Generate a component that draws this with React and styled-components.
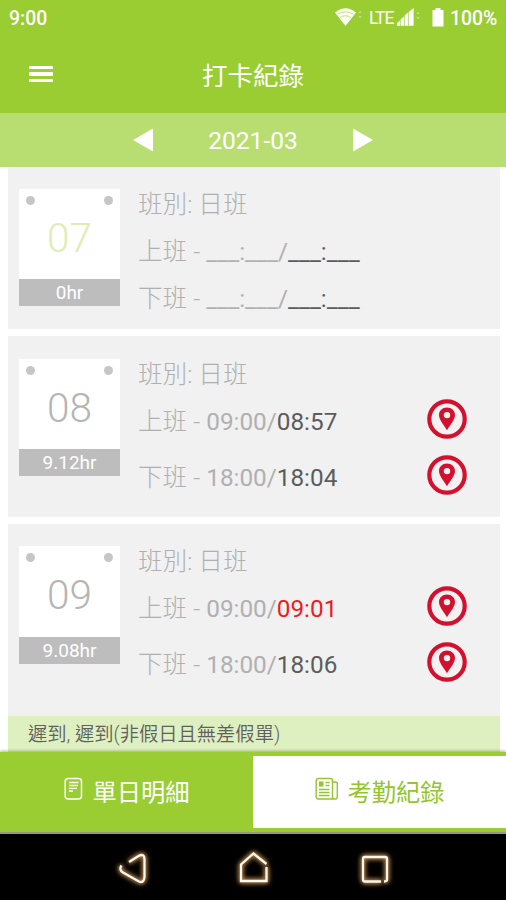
import React from "react";
import styled, { createGlobalStyle } from "styled-components";

const records = [
  {
    day: "07",
    hours: "0hr",
    holiday: true,
    shift: "日班",
    punches: [
      { label: "上班", plan: "___:___", real: "___:___" },
      { label: "下班", plan: "___:___", real: "___:___" },
    ],
  },
  {
    day: "08",
    hours: "9.12hr",
    shift: "日班",
    punches: [
      { label: "上班", plan: "09:00", real: "08:57", located: true },
      { label: "下班", plan: "18:00", real: "18:04", located: true },
    ],
  },
  {
    day: "09",
    hours: "9.08hr",
    shift: "日班",
    punches: [
      { label: "上班", plan: "09:00", real: "09:01", late: true, located: true },
      { label: "下班", plan: "18:00", real: "18:06", located: true },
    ],
    note: "遲到, 遲到(非假日且無差假單)",
  },
];

function StatusIcons() {
  return (
    <svg width="166" height="24" viewBox="332 6 166 24" fill="#fff">
      <path d="M335 12.500Q345.500 4 356 12.500L345.500 26Z" opacity="0.95" />
      <path
        d="M337.500 14.300Q345.500 9.300 353.500 14.300M340 17.500Q345.500 14 351 17.500"
        fill="none"
        stroke="#9acd32"
        strokeWidth="0.6"
      />
      <path d="M358.500 13l1.500-2.500 1.500 2.500zM358.500 16l1.500 2.500 1.500-2.500z" opacity="0.4" />
      <path d="M397 25.800V23l3-2.500v5.300zM400.600 25.800v-6.300l3.300-3v9.300zM404.600 25.800v-10.300l3.300-3v13.300zM408.600 25.800V12l5-4v17.800z" />
      <path d="M416.500 14l1.500-2.500 1.500 2.500zM416.500 17l1.500 2.500 1.500-2.500z" opacity="0.4" />
      <path d="M435.500 8h5v2h3v16.500h-11V10h3z" />
    </svg>
  );
}

function PinIcon() {
  return (
    <svg width="40" height="40" viewBox="0 0 40 40">
      <circle cx="20" cy="20" r="17.700" fill="#f5f1f1" stroke="#d3112f" strokeWidth="4.200" />
      <path
        fill="#d3112f"
        fillRule="evenodd"
        d="M20 8.500c-4.600 0-8 3.300-8 7.500 0 5 4.400 9 8 15.200 3.600-6.200 8-10.200 8-15.200 0-4.200-3.400-7.500-8-7.500zm0 4.400a3.200 3.200 0 1 1 0 6.400 3.200 3.200 0 0 1 0-6.400z"
      />
    </svg>
  );
}

function DetailIcon() {
  return (
    <svg width="20" height="24" viewBox="0 0 20 24" fill="none" stroke="currentColor">
      <rect x="1.200" y="1.500" width="16.300" height="20.500" rx="3" strokeWidth="1.500" />
      <path d="M5 5.500h9.500M5 8.500h9M5 11.300h8M5 14h4" strokeWidth="1.300" />
    </svg>
  );
}

function NewsIcon() {
  return (
    <svg width="24" height="24" viewBox="0 0 24 24" fill="none" stroke="currentColor">
      <path
        d="M3 1.500h12.500a2 2 0 0 1 2 2V22H3.500a2.300 2.300 0 0 1-2.300-2.300V3.500a2 2 0 0 1 1.800-2zM17.500 5h2.800a2 2 0 0 1 2 2v12.700a2.300 2.300 0 0 1-4.800 0"
        strokeWidth="1.400"
      />
      <path d="M10.500 5.500h4M10.500 8.500h4M4 12.500h10.500M4 15.500h10.500M4 18.500h10.500" strokeWidth="1.300" />
      <rect x="4.500" y="5" width="3.500" height="4" fill="currentColor" />
    </svg>
  );
}

function Record({ record }) {
  return (
    <Card>
      <CardBody $tall={record.punches[0].located}>
        <Calendar>
          <Sheet>
            <Holes>
              <i />
              <i />
            </Holes>
            <Day $holiday={record.holiday}>{record.day}</Day>
          </Sheet>
          <Hours>{record.hours}</Hours>
        </Calendar>
        <Info>
          <Shift>班別: {record.shift}</Shift>
          {record.punches.map((punch) => (
            <Punch key={punch.label} $tall={punch.located}>
              <span>
                {punch.label} - <Time>{punch.plan}/</Time>
                <Real $late={punch.late}>{punch.real}</Real>
              </span>
              {punch.located && <PinIcon />}
            </Punch>
          ))}
        </Info>
      </CardBody>
      {record.note && <Note>{record.note}</Note>}
    </Card>
  );
}

function App() {
  return (
    <Screen>
      <GlobalStyle />
      <StatusBar>
        <span>9:00</span>
        <StatusRight>
          <StatusIcons />
          <Network>LTE</Network>
          <Battery>100%</Battery>
        </StatusRight>
      </StatusBar>
      <Header>
        <MenuButton aria-label="menu">
          <i />
          <i />
          <i />
        </MenuButton>
        <h1>打卡紀錄</h1>
      </Header>
      <MonthBar>
        <svg width="20" height="24" viewBox="0 0 20 24">
          <path d="M0 12L20 0.500V23.500Z" fill="#fff" />
        </svg>
        <span>2021-03</span>
        <svg width="20" height="24" viewBox="0 0 20 24">
          <path d="M20 12L0 0.500V23.500Z" fill="#fff" />
        </svg>
      </MonthBar>
      <List>
        {records.map((record) => (
          <Record key={record.day} record={record} />
        ))}
      </List>
      <Tabs>
        <Tab>
          <DetailIcon />
          <span>單日明細</span>
        </Tab>
        <Tab $active>
          <NewsIcon />
          <span>考勤紀錄</span>
        </Tab>
      </Tabs>
      <NavBar>
        <svg width="34" height="36" viewBox="0 0 34 36">
          <path d="M14 12L23.500 6Q29.500 3 29.500 9V27Q29 33.500 24 31.500L8 22.500Q3.500 19.500 6.500 15.500" />
        </svg>
        <svg width="34" height="36" viewBox="0 0 34 36">
          <path d="M30.500 14L17.500 3.500L5 14.500V31H30.500V17" />
        </svg>
        <svg width="34" height="36" viewBox="0 0 34 36">
          <path d="M24 31.500H8Q6 31.500 6 29.500V9Q6 7 8 7H28Q30 7 30 9V29.500Q30 31.500 27 31.500" />
        </svg>
      </NavBar>
    </Screen>
  );
}

const GlobalStyle = createGlobalStyle`
  * {
    box-sizing: border-box;
  }
  body {
    margin: 0;
    font-family: Roboto, "Noto Sans CJK TC", sans-serif;
    background-color: #fff;
  }
`;

const Screen = styled.div`
  display: flex;
  flex-direction: column;
  width: 506px;
  height: 900px;
  overflow: hidden;
`;

const StatusBar = styled.div`
  display: flex;
  justify-content: space-between;
  align-items: center;
  height: 36px;
  padding: 0 8px 0 9px;
  background-color: #9acd32;
  color: #fff;
  font-size: 19.4px;
  font-weight: 500;
`;

const StatusRight = styled.div`
  display: grid;
  grid-template-columns: 37px 81px 48px;
  align-items: center;

  svg {
    grid-area: 1 / 1 / 2 / 4;
  }
`;

const Network = styled.span`
  grid-area: 1 / 2;
  font-size: 17.5px;
  font-weight: 400;
  letter-spacing: -1px;
`;

const Battery = styled.span`
  grid-area: 1 / 3;
`;

const Header = styled.header`
  display: grid;
  grid-template-columns: 82px 1fr 82px;
  align-items: center;
  height: 77px;
  padding-bottom: 2px;
  background-color: #9acd32;
  color: #fff;

  h1 {
    margin: 0;
    font-size: 25.5px;
    font-weight: 400;
    text-align: center;
  }
`;

const MenuButton = styled.button`
  display: flex;
  flex-direction: column;
  gap: 3.5px;
  margin-left: 29px;
  padding: 1px 0 0;
  border: none;
  background: none;

  i {
    width: 24px;
    height: 3.3px;
    border-radius: 1px;
    background-color: #fff;
  }
`;

const MonthBar = styled.div`
  display: flex;
  justify-content: center;
  align-items: center;
  gap: 55px;
  height: 54px;
  background-color: #b8dd70;
  color: #fff;
  font-size: 24.6px;
`;

const List = styled.main`
  display: flex;
  flex: 1;
  flex-direction: column;
  gap: 7px;
  padding: 0 6px 0 8px;
  overflow: hidden;
`;

const Card = styled.section`
  flex-shrink: 0;
  background-color: #f1f1f1;
`;

const CardBody = styled.div`
  display: flex;
  gap: 18px;
  height: ${({ $tall }) => ($tall ? "180.2px" : "162.4px")};
  padding: ${({ $tall }) => ($tall ? "22.6px" : "22px")} 33px 0 11px;
`;

const Calendar = styled.div`
  width: 101px;
  height: 117px;
`;

const Sheet = styled.div`
  height: 90.4px;
  padding: 7px 7px 0;
  background-color: #fff;
`;

const Holes = styled.div`
  display: flex;
  justify-content: space-between;

  i {
    width: 9px;
    height: 9px;
    border-radius: 50%;
    background-color: #c6c6c6;
  }
`;

const Day = styled.div`
  margin-top: 8.6px;
  color: ${({ $holiday }) => ($holiday ? "#deedb2" : "#b5b5b5")};
  font-size: 40.5px;
  font-weight: 360;
  line-height: 48px;
  text-align: center;
`;

const Hours = styled.div`
  height: 27px;
  background-color: #bdbdbd;
  color: #fff;
  font-size: 19px;
  line-height: 27px;
  text-align: center;
`;

const Info = styled.div`
  flex: 1;
  margin-top: -8px;
  color: #b0b0b0;
  font-size: 24.6px;
  font-weight: 300;
`;

const Shift = styled.div`
  height: 47px;
  line-height: 47px;
`;

const Punch = styled.div`
  display: flex;
  justify-content: space-between;
  height: ${({ $tall }) => ($tall ? "56px" : "47px")};
  line-height: 47px;
  white-space: nowrap;

  svg {
    flex-shrink: 0;
    margin-top: 1px;
  }
`;

const Time = styled.span`
  font-size: 24.3px;
  font-weight: 400;
`;

const Real = styled(Time)`
  color: ${({ $late }) => ($late ? "#ee1c1c" : "#5c5c5c")};
`;

const Note = styled.div`
  margin-top: 12.2px;
  height: 46px;
  padding-left: 20px;
  background-color: #dff0c0;
  color: #606060;
  font-size: 19.3px;
  font-weight: 350;
  line-height: 37px;
`;

const Tabs = styled.div`
  position: relative;
  display: flex;
  height: 80px;
  padding: 4px 0;
  background-color: #9acd32;
  box-shadow: 0 -1px 3px rgba(0, 0, 0, 0.3);
`;

const Tab = styled.div`
  display: flex;
  flex: 1;
  justify-content: center;
  align-items: center;
  gap: 8px;
  padding: 0 0 4px 1px;
  background-color: ${({ $active }) => ($active ? "#fff" : "#9acd32")};
  color: ${({ $active }) => ($active ? "#94c52c" : "#fff")};
  font-size: 24.3px;

  svg {
    margin-bottom: 3px;
  }
`;

const NavBar = styled.nav`
  display: flex;
  justify-content: center;
  align-items: center;
  gap: 87px;
  height: 68px;
  border-top: 2px solid #99a08b;
  background-color: #000;

  svg {
    overflow: visible;
    margin-top: 2px;
    fill: none;
    stroke: #fff6ec;
    stroke-width: 2.3px;
    filter: drop-shadow(0 0 2px #b98a50) drop-shadow(0 0 2px #b98a50);
  }
`;

export default App;
